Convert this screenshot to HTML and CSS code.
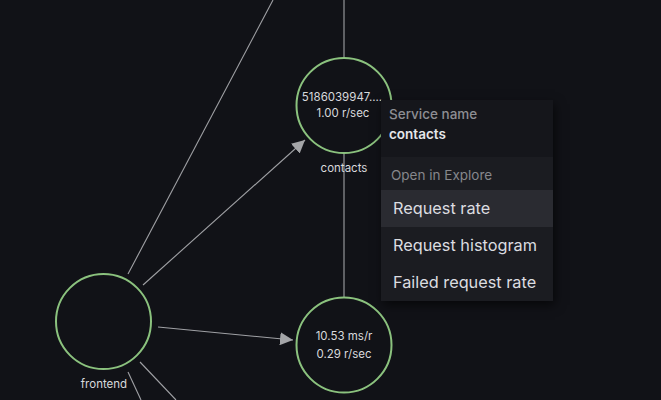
FILE: index.html
```html
<!DOCTYPE html>
<html>
<head>
<meta charset="utf-8">
<link rel="stylesheet" href="styles.css">
</head>
<body>
<div class="canvas">
  <svg class="graph" width="661" height="400" viewBox="0 0 661 400">
    <defs>
      <marker id="arrow" viewBox="0 0 10 10" refX="10" refY="5" markerWidth="13" markerHeight="13" markerUnits="userSpaceOnUse" orient="auto">
        <path d="M0 0 L10 5 L0 10 Z" fill="#a4a5a8"/>
      </marker>
    </defs>
    <g class="edges">
      <line x1="344" y1="0" x2="344" y2="57"/>
      <line x1="344" y1="154" x2="344" y2="297"/>
      <line x1="128" y1="274" x2="273" y2="0"/>
      <line x1="143" y1="285" x2="305" y2="140" marker-end="url(#arrow)"/>
      <line x1="158" y1="327" x2="293" y2="340" marker-end="url(#arrow)"/>
      <line x1="128" y1="372" x2="141" y2="400"/>
      <line x1="140" y1="362" x2="176" y2="400"/>
    </g>
    <g class="nodes">
      <circle cx="344" cy="105.5" r="47.5"/>
      <circle cx="344" cy="345" r="47.5"/>
      <circle cx="103.5" cy="321.5" r="47.5"/>
    </g>
    <g class="labels">
      <text x="342" y="101">5186039947....</text>
      <text x="343" y="117">1.00 r/sec</text>
      <text x="344" y="172">contacts</text>
      <text x="344" y="340">10.53 ms/r</text>
      <text x="344" y="358">0.29 r/sec</text>
      <text x="104" y="388">frontend</text>
    </g>
  </svg>
  <div class="menu">
    <div class="menu-header">
      <div class="menu-label">Service name</div>
      <div class="menu-value">contacts</div>
    </div>
    <div class="menu-body">
      <div class="menu-group">Open in Explore</div>
      <div class="menu-item active">Request rate</div>
      <div class="menu-item">Request histogram</div>
      <div class="menu-item">Failed request rate</div>
    </div>
  </div>
</div>
</body>
</html>
```
FILE: styles.css
```css
html, body {
  margin: 0;
  padding: 0;
  background: #111217;
}
.canvas {
  position: relative;
  width: 661px;
  height: 400px;
  overflow: hidden;
  background: #111217;
  font-family: Inter, "Noto Sans", sans-serif;
}
.graph {
  position: absolute;
  left: 0;
  top: 0;
}
.edges line {
  stroke: #a0a1a5;
  stroke-width: 1.1;
}
.nodes circle {
  fill: none;
  stroke: #8bc27e;
  stroke-width: 2;
}
.labels text {
  fill: #d8d9dc;
  font-family: Inter, "Noto Sans", sans-serif;
  font-size: 11.5px;
  text-anchor: middle;
}
.menu {
  position: absolute;
  left: 381px;
  top: 100px;
  width: 172px;
  background: #15161b;
  box-shadow: 2px 4px 10px rgba(0, 0, 0, 0.6);
}
.menu-header {
  padding: 4px 8px 13px;
  font-size: 13.5px;
  line-height: 20px;
}
.menu-label {
  color: #8d8e93;
  font-weight: 500;
}
.menu-value {
  color: #e6e7ea;
  font-weight: 600;
}
.menu-body {
  background: #1b1c21;
  padding-top: 8px;
}
.menu-group {
  padding: 0 10px;
  font-size: 13.5px;
  line-height: 20px;
  color: #86878c;
  margin-bottom: 5px;
}
.menu-item {
  padding: 0 12px;
  height: 37px;
  line-height: 37px;
  font-size: 16.3px;
  color: #dcdde0;
  white-space: nowrap;
}
.menu-item.active {
  background: #2a2b31;
}
```
